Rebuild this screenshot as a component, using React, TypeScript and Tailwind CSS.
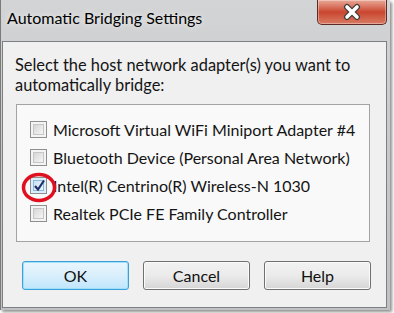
import React from "react";

const font = { fontFamily: 'Lato, "Noto Sans", sans-serif' };

function CheckBox({ checked }: { checked?: boolean }) {
  return (
    <div
      className={
        "w-[17px] h-[17px] border border-[#8f8f8f] p-[2px] shrink-0 " +
        (checked ? "bg-[#dbeefb]" : "bg-[#f4f4f4]")
      }
    >
      <div
        className={
          "w-full h-full border relative " +
          (checked
            ? "border-[#8fb6d6] bg-gradient-to-br from-[#c9e2f5] to-[#eef7fd]"
            : "border-[#c6c6c6] bg-gradient-to-br from-[#d6d6d6] to-[#f6f6f6]")
        }
      >
        {checked && (
          <svg className="absolute left-[-1px] top-[-2px]" width="13" height="13" viewBox="0 0 13 13">
            <path d="M2 7 L5 10.5 L11 1.5" fill="none" stroke="#1f2f6b" strokeWidth="2.2" />
          </svg>
        )}
      </div>
    </div>
  );
}

function Btn({ label, focused }: { label: string; focused?: boolean }) {
  return (
    <div
      className={
        "w-[107px] h-[29px] rounded-[3px] border flex items-center justify-center text-[16px] text-[#111] " +
        (focused
          ? "border-[#3c9fd8] shadow-[inset_0_0_0_1px_#9fe0fb] bg-gradient-to-b from-[#eaf6fd] via-[#d9effc] to-[#bee6fd]"
          : "border-[#707070] shadow-[inset_0_0_0_1px_#fbfbfb] bg-gradient-to-b from-[#f2f2f2] via-[#ebebeb] to-[#d6d6d6]")
      }
    >
      {label}
    </div>
  );
}

export default function App() {
  const items = [
    "Microsoft Virtual WiFi Miniport Adapter #4",
    "Bluetooth Device (Personal Area Network)",
    "Intel(R) Centrino(R) Wireless-N 1030",
    "Realtek PCIe FE Family Controller",
  ];
  return (
    <div className="w-[394px] h-[313px] bg-white overflow-hidden" style={font}>
      <div className="w-[390px] h-[310px] bg-gradient-to-b from-[#d3d4d5] via-[#c6c8ca] to-[#bfc1c3] border-l border-[#7a7a7a] shadow-[2px_2px_3px_rgba(0,0,0,0.45)] flex flex-col">
        <div className="h-[41px] flex items-start shrink-0">
          <div className="pl-[6px] pt-[7px] text-[16px] leading-[22px] text-black [text-shadow:0_0_6px_rgba(255,255,255,0.9)]">
            Automatic Bridging Settings
          </div>
          <div className="ml-auto mr-[3px] w-[70px] h-[25px] rounded-b-[5px] border border-t-0 border-[#5e2b24] bg-gradient-to-b from-[#e8a898] via-[#c9452f] to-[#d87a62] flex items-center justify-center shadow-[inset_0_0_0_1px_rgba(255,255,255,0.35)]">
            <svg width="22" height="18" viewBox="0 0 22 18">
              <path d="M6 4 L16 14 M16 4 L6 14" stroke="#3a3a3a" strokeWidth="6" strokeLinecap="round" />
              <path d="M6 4 L16 14 M16 4 L6 14" stroke="#ffffff" strokeWidth="3.6" strokeLinecap="round" />
            </svg>
          </div>
        </div>
        <div className="ml-[1px] mr-[3px] h-[267px] bg-[#f0f0f0] border border-[#7d7f82] flex flex-col">
          <div className="pl-[12px] pt-[13px] text-[16.4px] leading-[20px] text-[#141414]">
            <div>Select the host network adapter(s) you want to</div>
            <div>automatically bridge:</div>
          </div>
          <div className="ml-[13px] mt-[9px] w-[354px] h-[138px] border border-[#a3a3a3] bg-[#f9f9f9] pl-[13px] pt-[16px] flex flex-col gap-[11px] relative">
            {items.map((t, i) => (
              <div key={t} className="flex items-center gap-[6px] h-[17px] text-[16px] text-[#141414]">
                <CheckBox checked={i === 2} />
                <span>{t}</span>
              </div>
            ))}
            <svg className="absolute left-[4px] top-[67px]" width="36" height="31" viewBox="0 0 36 31">
              <ellipse cx="18" cy="15.5" rx="15.5" ry="13" fill="none" stroke="#e01020" strokeWidth="3.5" />
            </svg>
          </div>
          <div className="flex gap-[14px] pl-[19px] mt-[19px]">
            <Btn label="OK" focused />
            <Btn label="Cancel" />
            <Btn label="Help" />
          </div>
        </div>
      </div>
    </div>
  );
}
